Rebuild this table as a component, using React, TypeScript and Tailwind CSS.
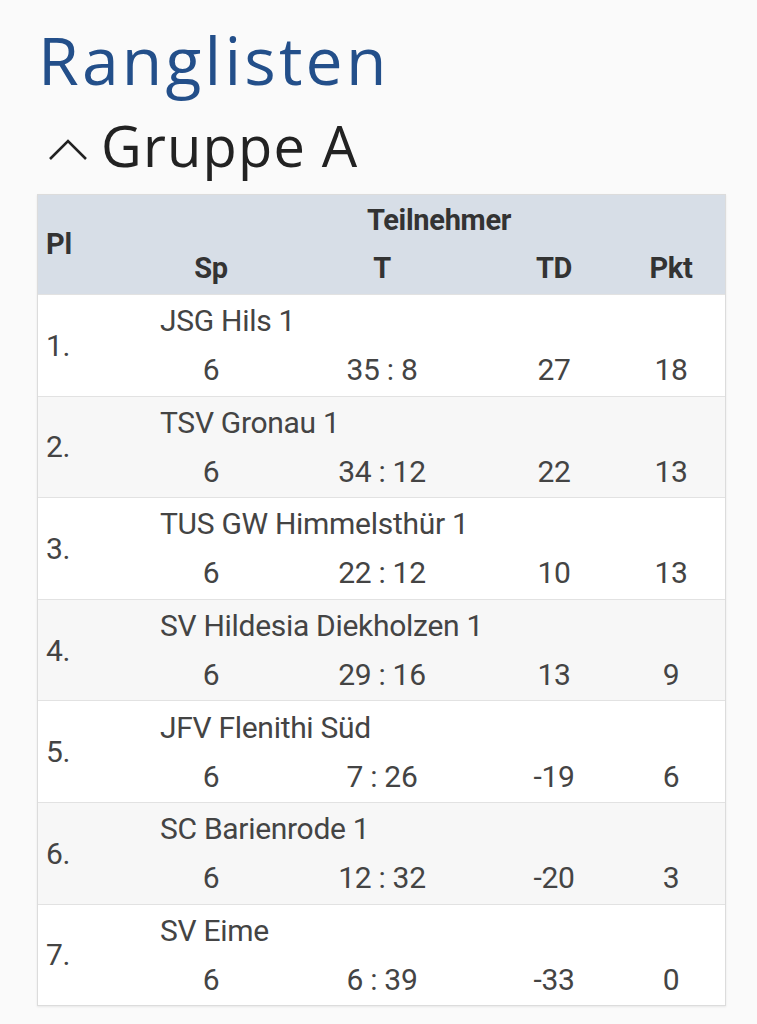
import React from "react";

const rows = [
  { pl: "1.", name: "JSG Hils 1", sp: "6", t: "35 : 8", td: "27", pkt: "18" },
  { pl: "2.", name: "TSV Gronau 1", sp: "6", t: "34 : 12", td: "22", pkt: "13" },
  { pl: "3.", name: "TUS GW Himmelsthür 1", sp: "6", t: "22 : 12", td: "10", pkt: "13" },
  { pl: "4.", name: "SV Hildesia Diekholzen 1", sp: "6", t: "29 : 16", td: "13", pkt: "9" },
  { pl: "5.", name: "JFV Flenithi Süd", sp: "6", t: "7 : 26", td: "-19", pkt: "6" },
  { pl: "6.", name: "SC Barienrode 1", sp: "6", t: "12 : 32", td: "-20", pkt: "3" },
  { pl: "7.", name: "SV Eime", sp: "6", t: "6 : 39", td: "-33", pkt: "0" },
];

const cols = "grid grid-cols-[113px_120px_222px_122px_112px]";

export default function App() {
  return (
    <div className="min-h-[1024px] w-[757px] bg-[#fafafa] font-['Roboto',sans-serif]">
      <div className="pl-[37px] pt-[15px]">
        <h1 className="font-['Open_Sans',sans-serif] font-normal text-[66px] leading-[88px] text-[#234f8a] pl-[1px] tracking-[3.2px]">
          Ranglisten
        </h1>
        <div className="flex items-center h-[72px] mt-[6px]">
          <svg width="46" height="30" viewBox="0 0 46 30" className="ml-[10px] mr-[8px] mt-[10px]">
            <polyline points="3,24 21,6 39,24" fill="none" stroke="#222" strokeWidth="2.6" />
          </svg>
          <span className="font-['Open_Sans',sans-serif] font-normal text-[56px] leading-[72px] text-[#222] tracking-[1.2px]">
            Gruppe A
          </span>
        </div>
        <div className="w-[689px] mt-[13px] border border-[#dcdcdc] shadow-[0_1px_2px_rgba(0,0,0,0.08)] bg-white">
          <div className={`${cols} bg-[#d7dee7] h-[99px] text-[29px] font-bold text-[#333] tracking-[-0.3px]`}>
            <div className="row-span-2 flex items-center pl-[8px]">Pl</div>
            <div className="col-span-4 flex items-end justify-center pb-[1px]">Teilnehmer</div>
            <div className="flex items-start justify-center pt-[3px]">Sp</div>
            <div className="flex items-start justify-center pt-[3px]">T</div>
            <div className="flex items-start justify-center pt-[3px]">TD</div>
            <div className="flex items-start justify-center pt-[3px]">Pkt</div>
          </div>
          {rows.map((r, i) => (
            <div
              key={r.pl}
              className={`${cols} h-[101.6px] border-t border-[#e2e2e2] text-[30px] tracking-[-0.3px] text-[#444] ${
                i % 2 === 1 ? "bg-[#f7f7f7]" : "bg-white"
              }`}
            >
              <div className="row-span-2 flex items-center pl-[8px]">{r.pl}</div>
              <div className="col-span-4 flex items-end pl-[9px] pb-[1px]">{r.name}</div>
              <div className="flex items-start justify-center pt-[3px]">{r.sp}</div>
              <div className="flex items-start justify-center pt-[3px]">{r.t}</div>
              <div className="flex items-start justify-center pt-[3px]">{r.td}</div>
              <div className="flex items-start justify-center pt-[3px]">{r.pkt}</div>
            </div>
          ))}
        </div>
      </div>
    </div>
  );
}
